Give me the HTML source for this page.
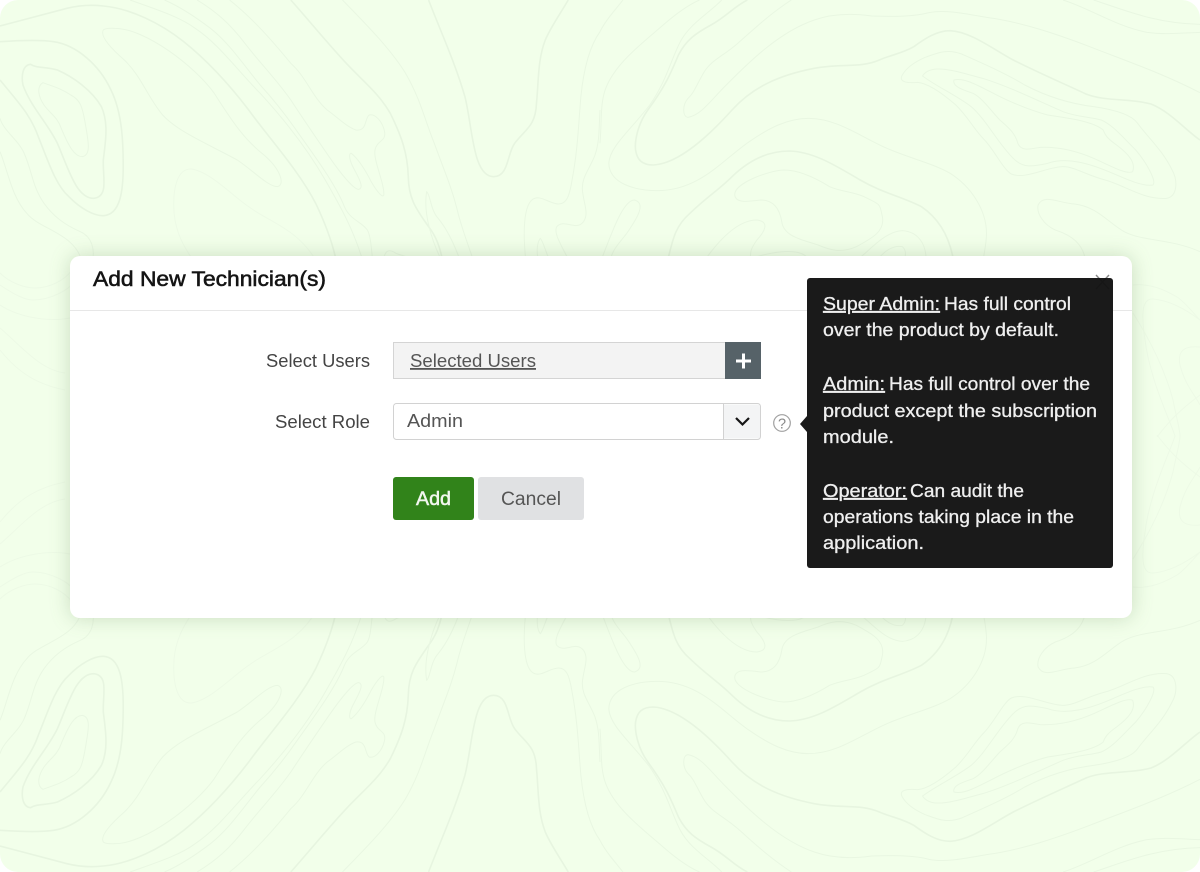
<!DOCTYPE html>
<html lang="en">
<head>
<meta charset="utf-8">
<title>Add New Technician(s)</title>
<style>
html,body{margin:0;padding:0;background:#fff;width:1200px;height:872px;overflow:hidden}
svg{display:block}
text{font-family:"Liberation Sans",Arial,sans-serif;filter:blur(.3px)}
.tip{fill:#efefef;font-size:18px;stroke:#efefef;stroke-width:.3px}
.u{text-decoration:underline}
.l{fill:none;stroke:#e9f7e2;stroke-width:1;vector-effect:non-scaling-stroke}
.t{stroke-width:1.6;stroke:#e7f5e0}
.f{stroke:#edfae6}
.m{stroke-width:.55px}
</style>
</head>
<body>
<svg width="1200" height="872" viewBox="0 0 1200 872" xmlns="http://www.w3.org/2000/svg">
<defs>
<clipPath id="pg"><rect width="1200" height="872" rx="18"/></clipPath>
<g id="half">
  <g transform="scale(.38265 .33333)">
    <path class="l t" d="M0,78 C60,60 140,35 175,25 C210,15 240,14 270,18 C340,25 420,70 480,125 C540,180 600,255 650,330 C700,410 780,510 825,610 C850,670 870,730 880,790"/>
    <path class="l" d="M340,0 C400,25 470,50 510,85 C570,130 620,210 680,280 C740,355 800,440 850,540 C890,620 925,690 950,790"/>
    <path class="l" d="M430,0 C470,20 510,50 550,85 C600,130 640,200 680,255 C720,305 750,350 780,400 C830,480 880,560 900,620 C915,660 945,665 960,690 C970,710 970,750 975,790"/>
    <path class="l" d="M515,0 C565,35 600,70 640,130 C680,190 720,235 760,300 C800,370 830,420 860,470 C890,520 925,570 938,568 C955,562 930,520 920,495 C912,475 912,458 918,460 C935,475 955,510 970,545 C985,575 1000,595 1003,585 C1005,550 975,480 980,450 C985,420 1010,425 1005,395 C1000,365 980,340 965,345 C952,355 960,395 930,390 C905,380 880,350 855,330 C815,290 800,230 760,190 C710,120 660,55 600,0"/>
    <path class="l t" d="M760,0 C810,65 860,135 905,190 C950,245 990,280 1020,340 C1050,410 1065,460 1067,530 C1068,600 1090,630 1120,680 C1140,710 1150,740 1158,790"/>
    <path class="l" d="M895,0 C950,65 1020,145 1060,220 C1100,300 1110,360 1135,430 C1160,510 1180,560 1195,630 C1205,680 1225,740 1240,790"/>
    <path class="l t" d="M1120,0 C1150,90 1190,190 1215,290 C1235,380 1235,530 1290,530 C1330,530 1325,460 1345,430 C1370,390 1400,380 1402,310 C1408,240 1405,180 1425,120 C1440,80 1465,40 1485,0"/>
    <path class="l" d="M1568,95 C1540,140 1525,210 1518,290 C1512,370 1510,450 1495,540 C1488,590 1480,612 1460,612 C1435,612 1410,580 1390,600 C1370,620 1365,690 1375,790"/>
    <path class="l" d="M1568,330 C1565,380 1568,420 1555,465 C1540,510 1520,530 1522,570 C1525,610 1540,640 1525,665 C1505,695 1475,655 1455,680 C1445,700 1470,740 1490,790"/>
    <path class="l" d="M1408,790 C1400,750 1405,725 1412,715 C1420,725 1425,755 1440,790"/>
    <path class="l" d="M1158,790 C1130,730 1105,640 1115,575 C1125,585 1125,630 1145,655 C1170,690 1190,740 1205,790"/>
    <path class="l t" d="M0,240 C50,310 80,345 100,410 C125,480 145,555 180,590 C210,625 245,648 270,647 C315,645 322,570 322,500 C322,430 320,340 290,270 C260,195 200,135 140,125 C100,118 40,122 0,125"/>
    <path class="l t" d="M80,193 C60,195 55,225 60,255 C80,320 125,370 150,430 C180,510 200,595 245,595 C285,590 268,530 270,480 C275,430 285,370 265,320 C240,270 190,230 150,210 C120,200 95,205 80,193Z"/>
    <path class="l" d="M112,248 C95,260 100,290 115,315 C130,340 150,350 160,385 C180,440 195,470 215,470 C240,465 230,420 222,365 C215,320 210,300 185,285 C160,265 135,258 112,248Z"/>
    <path class="l" d="M270,90 C260,110 295,150 325,180 C370,230 385,290 425,345 C465,395 540,430 620,480 C660,510 700,560 725,560 C745,555 735,510 690,465 C640,420 610,370 560,280 C510,200 380,85 300,85 C285,84 275,85 270,90Z"/>
    <path class="l" d="M0,355 C10,395 50,420 65,465 C85,520 85,560 115,610 C140,650 170,675 210,695 C240,710 250,750 240,790"/>
    <path class="l" d="M0,455 C20,510 30,590 70,640 C105,690 200,700 215,790"/>
    <path class="l f" d="M510,790 C480,740 460,700 455,640 C450,560 465,505 500,507 C550,515 610,590 650,620 C700,665 780,685 830,790"/>
    <path class="l" d="M1000,790 C1005,750 1015,745 1035,760 C1050,768 1065,765 1080,790"/>
  </g>
  <g transform="translate(600 0) scale(.38265 .33333)">
    <path class="l" d="M0,430 C5,360 0,310 15,265 C40,190 110,130 165,75 C195,45 230,15 260,0"/>
    <path class="l" d="M0,95 C15,60 40,30 60,0"/>
    <path class="l" d="M0,790 C30,700 60,600 90,600 C120,610 100,650 70,700 C50,730 30,750 25,790"/>
    <path class="l" d="M318,0 C290,35 235,70 210,125 C185,180 175,240 130,315 C80,390 25,440 23,490 C25,550 90,572 150,572 C260,572 320,480 390,425 C440,385 490,355 545,355 C620,355 680,410 750,445 C810,475 870,490 915,520 C970,560 1010,630 1010,700 C1010,730 1005,750 1000,790"/>
    <path class="l t" d="M385,0 C350,20 330,50 290,75 C250,100 225,120 205,165 C185,220 170,260 125,330 C100,370 90,420 93,450 C97,480 110,495 140,495 C210,490 290,400 345,330 C400,260 470,225 560,205 C630,190 680,205 730,180 C760,165 790,160 820,140 C850,115 880,92 915,92 C970,95 1030,150 1080,180 C1140,215 1210,250 1270,282 C1320,305 1390,295 1440,312 C1490,335 1530,390 1568,420"/>
    <path class="l" d="M500,0 C440,45 400,90 360,130 C320,170 290,180 270,220 C250,260 245,280 230,295 C215,315 215,350 230,352 C265,345 290,300 330,255 C390,185 470,95 560,60 C610,40 660,40 710,48 C770,50 820,50 860,38 C900,28 950,40 1010,52 C1100,65 1200,105 1280,140 C1380,185 1470,220 1568,278"/>
    <path class="l" d="M790,225 C780,245 800,250 830,247 C860,250 900,285 930,315 C965,355 975,385 1005,420 C1030,450 1055,510 1075,522 C1110,540 1170,500 1210,500 C1240,500 1270,525 1320,540 C1370,555 1420,600 1480,595 C1510,590 1510,540 1495,510 C1470,450 1430,410 1405,370 C1390,345 1350,330 1290,320 C1220,310 1160,285 1110,255 C1060,220 1000,190 945,162 C905,145 880,160 850,172 C820,187 800,205 790,225Z"/>
    <path class="l" d="M843,228 C880,260 930,285 970,320 C1010,360 1040,430 1080,475 C1105,505 1130,500 1170,490 C1220,470 1280,490 1340,520 C1380,540 1420,560 1445,555 C1455,545 1430,490 1400,450 C1365,410 1340,375 1310,360 C1280,350 1250,352 1210,335 C1140,300 1070,260 1000,235 C950,220 910,205 880,207 C860,208 848,218 843,228Z"/>
    <path class="l" d="M925,240 C920,260 950,270 975,280 C1000,295 1020,330 1045,360 C1070,385 1085,400 1092,430 C1100,455 1125,447 1150,442 C1200,440 1250,455 1290,475 C1330,495 1375,525 1392,515 C1400,490 1385,465 1350,435 C1325,415 1320,405 1315,390 C1290,365 1230,355 1170,345 C1120,330 1060,300 1020,275 C985,255 950,232 925,240Z"/>
    <path class="l t" d="M175,790 C190,720 195,680 235,640 C280,590 310,570 345,530 C390,480 440,453 495,453 C560,455 620,500 680,540 C740,580 790,590 840,620 C885,655 915,710 925,790"/>
    <path class="l" d="M352,585 C355,610 385,605 420,600 C455,600 470,630 475,665 C480,710 530,720 570,735 C600,750 630,760 670,740 C710,715 745,695 738,650 C730,610 735,615 690,590 C660,575 630,575 600,560 C565,535 520,510 480,510 C440,512 350,550 352,585Z"/>
    <path class="l" d="M268,790 C310,720 360,660 410,660 C445,665 430,695 410,720 C395,745 390,755 395,790"/>
    <path class="l" d="M660,790 C700,760 740,695 790,692 C830,695 855,730 852,790"/>
    <path class="l" d="M720,790 C740,750 770,735 790,740 C800,750 800,760 795,790"/>
    <path class="l" d="M395,775 C450,755 540,735 548,790"/>
    <path class="l" d="M1270,790 C1265,730 1230,705 1190,690 C1160,675 1140,640 1145,615 C1160,580 1200,610 1240,612 C1300,620 1330,670 1370,695 C1420,725 1490,715 1568,755"/>
    <path class="l" d="M1210,0 C1280,25 1350,80 1430,97 C1480,105 1530,98 1568,97"/>
    <path class="l" d="M1290,0 C1370,30 1450,70 1568,73"/>
  </g>
  <path class="l f" d="M0,273 C10,283 25,288 35,288 C50,288 65,280 72,270"/>
  <path class="l f" d="M0,285 C15,295 25,300 33,300 C50,300 70,290 75,280"/>
  <path class="l f" d="M0,305 C20,318 50,322 70,318"/>
  <path class="l f" d="M0,328 C20,345 40,370 65,373"/>
  <path class="l f" d="M0,350 C20,375 40,385 65,390"/>
  <path class="l f" d="M1133,285 C1150,283 1165,290 1177,297 C1185,302 1195,315 1200,320"/>
  <path class="l f" d="M1200,320 C1180,305 1165,300 1153,299 C1140,298 1142,320 1145,340 C1150,380 1170,420 1175,436"/>
  <path class="l f" d="M1133,313 C1150,340 1165,370 1173,400 C1177,420 1180,430 1180,436"/>
  <path class="l f" d="M1200,347 C1180,345 1178,355 1180,365 C1185,385 1195,395 1200,405"/>
  <path class="l f" d="M1200,395 C1180,410 1170,420 1157,437"/>
</g>
</defs>

<g clip-path="url(#pg)">
  <rect width="1200" height="872" fill="#f2ffea"/>
  <use href="#half"/>
  <use href="#half" transform="matrix(1 0 0 -1 0 872)"/>
</g>

<!-- card -->
<rect x="70" y="256" width="1062" height="362" rx="10" fill="#fff" style="filter:drop-shadow(0 0 10px rgba(70,110,60,.24))"/>
<rect x="70" y="310" width="1062" height="1" fill="#e7e7e7"/>
<text class="m" x="93" y="286" font-size="21" fill="#141414" stroke="#141414" textLength="233" lengthAdjust="spacingAndGlyphs">Add New Technician(s)</text>

<!-- close -->
<path d="M1096,275 L1109,289 M1109,275 L1096,289" stroke="#888" stroke-width="1.4" fill="none"/>

<!-- select users -->
<text x="266" y="367" font-size="18" fill="#444" textLength="104" lengthAdjust="spacingAndGlyphs">Select Users</text>
<rect x="393.500" y="342.500" width="332" height="36" fill="#f3f3f3" stroke="#d4d4d4"/>
<text class="u" x="410" y="367" font-size="18" fill="#555" textLength="126" lengthAdjust="spacingAndGlyphs">Selected Users</text>
<rect x="725" y="342" width="36" height="37" fill="#566268"/>
<rect x="736" y="359.500" width="15" height="3" fill="#fff"/>
<rect x="742" y="353.500" width="3" height="15" fill="#fff"/>

<!-- select role -->
<text x="275" y="428" font-size="18" fill="#444" textLength="95" lengthAdjust="spacingAndGlyphs">Select Role</text>
<rect x="393.500" y="403.500" width="367" height="36" rx="3" fill="#fff" stroke="#d2d2d2"/>
<path d="M724,404.500 H757.500 Q760,404.500 760,407 V436 Q760,438.500 757.500,438.500 H724 Z" fill="#f3f4f5"/>
<rect x="723" y="404" width="1" height="35" fill="#d2d2d2"/>
<text x="407" y="427" font-size="18" fill="#555" textLength="56" lengthAdjust="spacingAndGlyphs">Admin</text>
<path d="M736,418 L742.500,424.500 L749,418" fill="none" stroke="#161616" stroke-width="2.2"/>

<!-- help -->
<circle cx="782" cy="423" r="8.300" fill="#fff" stroke="#a0a0a0" stroke-width="1.2"/>
<text x="782" y="428.500" font-size="14.500" fill="#8a8a8a" text-anchor="middle">?</text>

<!-- buttons -->
<rect x="393" y="477" width="81" height="43" rx="3" fill="#31831a"/>
<text x="416" y="505" font-size="19" fill="#f2f7ef" stroke="#f2f7ef" stroke-width=".5" textLength="35" lengthAdjust="spacingAndGlyphs">Add</text>
<rect x="478" y="477" width="106" height="43" rx="3" fill="#e0e1e3"/>
<text x="501" y="505" font-size="19" fill="#555" textLength="60" lengthAdjust="spacingAndGlyphs">Cancel</text>

<!-- tooltip -->
<path d="M807,416 L800,424 L807,432 Z" fill="#1a1a1a"/>
<rect x="807" y="278" width="306" height="290" rx="3" fill="#131313" fill-opacity=".97"/>
<text class="tip u" x="823" y="310" textLength="117" lengthAdjust="spacingAndGlyphs">Super Admin:</text>
<text class="tip" x="944" y="310" textLength="127" lengthAdjust="spacingAndGlyphs">Has full control</text>
<text class="tip" x="823" y="336" textLength="236" lengthAdjust="spacingAndGlyphs">over the product by default.</text>
<text class="tip u" x="823" y="390" textLength="62" lengthAdjust="spacingAndGlyphs">Admin:</text>
<text class="tip" x="889" y="390" textLength="201" lengthAdjust="spacingAndGlyphs">Has full control over the</text>
<text class="tip" x="823" y="417" textLength="274" lengthAdjust="spacingAndGlyphs">product except the subscription</text>
<text class="tip" x="823" y="443" textLength="71" lengthAdjust="spacingAndGlyphs">module.</text>
<text class="tip u" x="823" y="497" textLength="84" lengthAdjust="spacingAndGlyphs">Operator:</text>
<text class="tip" x="910" y="497" textLength="114" lengthAdjust="spacingAndGlyphs">Can audit the</text>
<text class="tip" x="823" y="523" textLength="251" lengthAdjust="spacingAndGlyphs">operations taking place in the</text>
<text class="tip" x="823" y="549" textLength="101" lengthAdjust="spacingAndGlyphs">application.</text>
</svg>
</body>
</html>
